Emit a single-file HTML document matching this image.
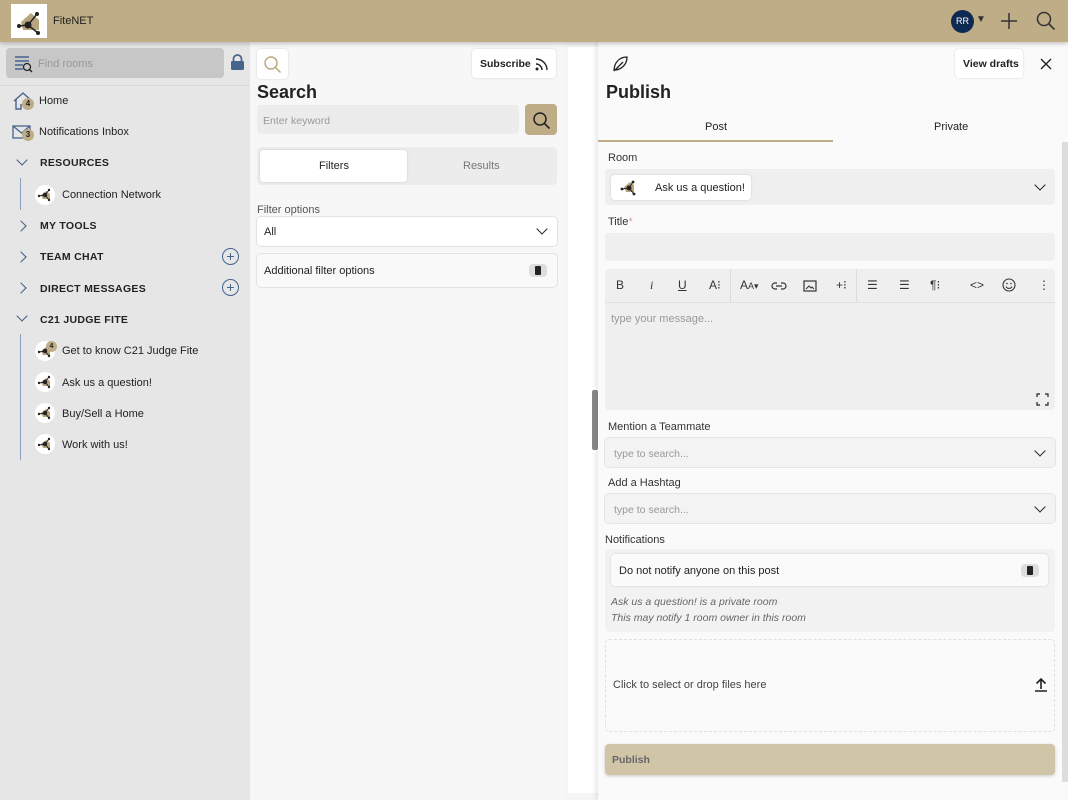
<!DOCTYPE html>
<html><head><meta charset="utf-8"><style>
*{box-sizing:border-box;margin:0;padding:0}
body{width:1068px;height:800px;overflow:hidden;font-family:"Liberation Sans",sans-serif;font-size:11px;color:#222;background:#f5f5f5;position:relative}
.a{position:absolute}
.hdr{left:0;top:0;width:1068px;height:42px;background:#bead86;box-shadow:0 2px 4px rgba(0,0,0,.2);z-index:5}
.side{left:0;top:42px;width:250px;height:758px;background:#e6e6e6}
.mid{left:250px;top:42px;width:315px;height:758px;background:#f7f7f7}
.pub{left:598px;top:42px;width:470px;height:758px;background:#fafafa;box-shadow:-2px 0 5px rgba(0,0,0,.1)}
.it{position:absolute;font-size:11px;color:#222}
.cap{font-weight:bold;font-size:10.5px;letter-spacing:.3px}
.box{position:absolute;background:#f0f0f0;border-radius:4px}
.wbox{position:absolute;background:#fff;border-radius:4px;box-shadow:0 0 2px rgba(0,0,0,.15)}
.lbl{position:absolute;font-size:11px;color:#333}
.ph{color:#999;font-size:10.5px}
.chev{position:absolute;width:8px;height:8px;border-right:1.5px solid #3c5a80;border-bottom:1.5px solid #3c5a80}
.av{position:absolute;width:20px;height:20px;border-radius:50%;background:#fff}
.plus{position:absolute;width:17px;height:17px;border:1.2px solid #46648c;border-radius:50%;color:#46648c;text-align:center;line-height:14px;font-size:14px}
.tog{position:absolute;width:18px;height:13px;background:#ddd;border-radius:4px}
.tog:after{content:"";position:absolute;left:6px;top:2px;width:6px;height:9px;background:#222;border-radius:1px}
.tb{position:absolute;top:278px;font-size:12px;color:#333}
</style></head><body>
<div class="a hdr">
  <div class="a" style="left:11px;top:4px;width:36px;height:34px;background:#fff"><svg width="36" height="34"><polygon points="10,18 20,9 28,16 28,26 12,26" fill="#b8a57d"/><g stroke="#222" stroke-width="1.5"><line x1="8" y1="22" x2="17" y2="21"/><line x1="17" y1="21" x2="26" y2="10"/><line x1="17" y1="21" x2="27" y2="29"/></g><circle cx="17" cy="21" r="3.5" fill="#222"/><circle cx="8" cy="22" r="2" fill="#222"/><circle cx="26" cy="10" r="2" fill="#222"/><circle cx="27" cy="29" r="2" fill="#222"/></svg></div>
  <div class="a" style="left:53px;top:15px;font-size:11px;color:#222">FiteNET</div>
  <div class="a" style="left:951px;top:10px;width:23px;height:23px;border-radius:50%;background:#0f2a52;color:#fff;font-size:9px;text-align:center;line-height:23px">RR</div>
  <div class="a" style="left:976px;top:14px;font-size:10px;color:#333">▼</div>
  <svg class="a" style="left:1000px;top:12px" width="18" height="18"><path d="M9 1v16M1 9h16" stroke="#333" stroke-width="1.5"/></svg>
  <svg class="a" style="left:1036px;top:11px" width="20" height="20"><circle cx="8" cy="8" r="6.5" fill="none" stroke="#333" stroke-width="1.5"/><path d="M13 13l5.5 5.5" stroke="#333" stroke-width="1.6"/></svg>
</div>

<div class="a side">
  <div class="box" style="left:6px;top:6px;width:218px;height:30px;background:#c7c7c7"></div>
  <svg class="a" style="left:14px;top:13px" width="20" height="18"><path d="M1 2h14M1 6h14M1 10h8M1 14h8" stroke="#46648c" stroke-width="1.4"/><circle cx="13" cy="12" r="3.5" fill="none" stroke="#222" stroke-width="1.3"/><path d="M15.5 14.5l2.5 2.5" stroke="#222" stroke-width="1.4"/></svg>
  <div class="it ph" style="left:38px;top:16px;font-size:11px">Find rooms</div>
  <svg class="a" style="left:230px;top:12px" width="15" height="17"><path d="M3.5 7V5a4 4 0 0 1 8 0v2" fill="none" stroke="#46648c" stroke-width="1.8"/><rect x="1" y="7" width="13" height="9" rx="1.5" fill="#46648c"/></svg>
  <div class="a" style="left:0;top:43px;width:250px;height:1px;background:#d8d8d8"></div>
  <svg class="a" style="left:12px;top:49px" width="22" height="20"><path d="M2 10L11 2l9 8M4 8v10h5v-5" fill="none" stroke="#46648c" stroke-width="1.4"/></svg>
  <div class="a" style="left:22px;top:56px;width:12px;height:12px;border-radius:50%;background:#bead86;font-size:8px;text-align:center;line-height:12px;font-weight:bold">4</div>
  <div class="it" style="left:39px;top:53px">Home</div>
  <svg class="a" style="left:12px;top:83px" width="20" height="16"><rect x="1" y="1" width="17" height="12" fill="none" stroke="#46648c" stroke-width="1.3"/><path d="M1 1l8.5 7 8.5-7" fill="none" stroke="#46648c" stroke-width="1.3"/></svg>
  <div class="a" style="left:22px;top:87px;width:12px;height:12px;border-radius:50%;background:#bead86;font-size:8px;text-align:center;line-height:12px;font-weight:bold">3</div>
  <div class="it" style="left:39px;top:84px">Notifications Inbox</div>
  <div class="chev" style="left:18px;top:114px;transform:rotate(45deg)"></div>
  <div class="it cap" style="left:40px;top:115px">RESOURCES</div>
  <div class="a" style="left:20px;top:136px;width:1px;height:32px;background:#8aa0bd"></div>
  <div class="av" style="left:35px;top:143px"><svg width="20" height="20"><polygon points="6,10 11,6 15,9 15,14 8,14" fill="#b8a57d"/><g stroke="#222"><line x1="4" y1="11" x2="10" y2="10"/><line x1="10" y1="10" x2="14" y2="5"/><line x1="10" y1="10" x2="14" y2="15"/></g><circle cx="10" cy="10" r="2.2" fill="#222"/><circle cx="4" cy="11" r="1.2" fill="#222"/><circle cx="14" cy="5" r="1.2" fill="#222"/><circle cx="14" cy="15" r="1.2" fill="#222"/></svg></div>
  <div class="it" style="left:62px;top:147px">Connection Network</div>
  <div class="chev" style="left:17px;top:180px;transform:rotate(-45deg)"></div>
  <div class="it cap" style="left:40px;top:178px">MY TOOLS</div>
  <div class="chev" style="left:17px;top:211px;transform:rotate(-45deg)"></div>
  <div class="it cap" style="left:40px;top:209px">TEAM CHAT</div>
  <div class="plus" style="left:222px;top:206px">+</div>
  <div class="chev" style="left:17px;top:242px;transform:rotate(-45deg)"></div>
  <div class="it cap" style="left:40px;top:241px">DIRECT MESSAGES</div>
  <div class="plus" style="left:222px;top:237px">+</div>
  <div class="chev" style="left:18px;top:270px;transform:rotate(45deg)"></div>
  <div class="it cap" style="left:40px;top:272px">C21 JUDGE FITE</div>
  <div class="a" style="left:20px;top:292px;width:1px;height:126px;background:#8aa0bd"></div>
  <div class="av" style="left:35px;top:299px"><svg width="20" height="20"><polygon points="6,10 11,6 15,9 15,14 8,14" fill="#b8a57d"/><g stroke="#222"><line x1="4" y1="11" x2="10" y2="10"/><line x1="10" y1="10" x2="14" y2="5"/><line x1="10" y1="10" x2="14" y2="15"/></g><circle cx="10" cy="10" r="2.2" fill="#222"/><circle cx="4" cy="11" r="1.2" fill="#222"/><circle cx="14" cy="15" r="1.2" fill="#222"/></svg></div><div class="a" style="left:46px;top:299px;width:11px;height:11px;border-radius:50%;background:#bead86;font-size:7px;text-align:center;line-height:11px;font-weight:bold">4</div>
  <div class="it" style="left:62px;top:303px">Get to know C21 Judge Fite</div>
  <div class="av" style="left:35px;top:330px"><svg width="20" height="20"><polygon points="6,10 11,6 15,9 15,14 8,14" fill="#b8a57d"/><g stroke="#222"><line x1="4" y1="11" x2="10" y2="10"/><line x1="10" y1="10" x2="14" y2="5"/><line x1="10" y1="10" x2="14" y2="15"/></g><circle cx="10" cy="10" r="2.2" fill="#222"/><circle cx="4" cy="11" r="1.2" fill="#222"/><circle cx="14" cy="5" r="1.2" fill="#222"/><circle cx="14" cy="15" r="1.2" fill="#222"/></svg></div><div class="it" style="left:62px;top:335px">Ask us a question!</div>
  <div class="av" style="left:35px;top:361px"><svg width="20" height="20"><polygon points="6,10 11,6 15,9 15,14 8,14" fill="#b8a57d"/><g stroke="#222"><line x1="4" y1="11" x2="10" y2="10"/><line x1="10" y1="10" x2="14" y2="5"/><line x1="10" y1="10" x2="14" y2="15"/></g><circle cx="10" cy="10" r="2.2" fill="#222"/><circle cx="4" cy="11" r="1.2" fill="#222"/><circle cx="14" cy="5" r="1.2" fill="#222"/><circle cx="14" cy="15" r="1.2" fill="#222"/></svg></div><div class="it" style="left:62px;top:366px">Buy/Sell a Home</div>
  <div class="av" style="left:35px;top:392px"><svg width="20" height="20"><polygon points="6,10 11,6 15,9 15,14 8,14" fill="#b8a57d"/><g stroke="#222"><line x1="4" y1="11" x2="10" y2="10"/><line x1="10" y1="10" x2="14" y2="5"/><line x1="10" y1="10" x2="14" y2="15"/></g><circle cx="10" cy="10" r="2.2" fill="#222"/><circle cx="4" cy="11" r="1.2" fill="#222"/><circle cx="14" cy="5" r="1.2" fill="#222"/><circle cx="14" cy="15" r="1.2" fill="#222"/></svg></div><div class="it" style="left:62px;top:397px">Work with us!</div>
</div>

<div class="a mid">
  <div class="wbox" style="left:7px;top:7px;width:31px;height:30px"></div>
  <svg class="a" style="left:13px;top:13px" width="20" height="20"><circle cx="8" cy="8" r="6" fill="none" stroke="#b8a57d" stroke-width="1.4"/><path d="M12.5 12.5l5 5" stroke="#b8a57d" stroke-width="1.5"/></svg>
  <div class="wbox" style="left:222px;top:7px;width:84px;height:29px"></div>
  <div class="it" style="left:230px;top:16px;font-weight:bold;font-size:10.5px">Subscribe</div>
  <svg class="a" style="left:284px;top:14px" width="16" height="16"><circle cx="3" cy="13" r="1.5" fill="#222"/><path d="M2 8a6 6 0 0 1 6 6M2 3a11 11 0 0 1 11 11" fill="none" stroke="#222" stroke-width="1.4"/></svg>
  <div class="it" style="left:7px;top:40px;font-size:18px;font-weight:bold">Search</div>
  <div class="box" style="left:7px;top:63px;width:262px;height:29px;background:#ececec"></div>
  <div class="it ph" style="left:13px;top:73px">Enter keyword</div>
  <div class="box" style="left:275px;top:62px;width:32px;height:31px;background:#bead86"></div>
  <svg class="a" style="left:282px;top:69px" width="19" height="19"><circle cx="8" cy="8" r="6" fill="none" stroke="#222" stroke-width="1.5"/><path d="M12.5 12.5l5 5" stroke="#222" stroke-width="1.6"/></svg>
  <div class="box" style="left:7px;top:105px;width:300px;height:38px;background:#ececec"></div>
  <div class="wbox" style="left:10px;top:108px;width:147px;height:32px"></div>
  <div class="it" style="left:69px;top:118px">Filters</div>
  <div class="it" style="left:213px;top:118px;color:#777">Results</div>
  <div class="it" style="left:7px;top:162px;color:#555">Filter options</div>
  <div class="wbox" style="left:7px;top:175px;width:300px;height:29px;box-shadow:0 0 0 1px #e3e3e3"></div>
  <div class="it" style="left:14px;top:184px">All</div>
  <div class="chev" style="left:288px;top:183px;transform:rotate(45deg);border-color:#222"></div>
  <div class="wbox" style="left:7px;top:212px;width:300px;height:33px;box-shadow:0 0 0 1px #e3e3e3;background:#f9f9f9"></div>
  <div class="it" style="left:14px;top:223px">Additional filter options</div>
  <div class="tog" style="left:279px;top:222px"></div>
</div>
<div class="a" style="left:568px;top:47px;width:32px;height:746px;background:#fff"></div>
<div class="a" style="left:592px;top:390px;width:6px;height:60px;background:#888;border-radius:2px"></div>

<div class="a pub">
  <svg class="a" style="left:13px;top:13px" width="18" height="18"><path d="M3 16C3 8 8 2 16 2c0 8-6 13-13 13M3 16l9-9" fill="none" stroke="#222" stroke-width="1.3"/></svg>
  <div class="wbox" style="left:357px;top:7px;width:68px;height:29px"></div>
  <div class="it" style="left:365px;top:16px;font-weight:bold;font-size:10.5px">View drafts</div>
  <svg class="a" style="left:442px;top:16px" width="12" height="12"><path d="M1 1l10 10M11 1L1 11" stroke="#222" stroke-width="1.4"/></svg>
  <div class="it" style="left:8px;top:40px;font-size:18px;font-weight:bold">Publish</div>
  <div class="it" style="left:107px;top:79px">Post</div>
  <div class="it" style="left:336px;top:79px">Private</div>
  <div class="a" style="left:0;top:98px;width:235px;height:2px;background:#bead86"></div>
  <div class="a" style="left:464px;top:100px;width:6px;height:640px;background:#ddd"></div>
  <div class="lbl" style="left:10px;top:110px">Room</div>
  <div class="box" style="left:7px;top:127px;width:450px;height:36px;background:#efefef"></div>
  <div class="wbox" style="left:13px;top:133px;width:140px;height:25px"></div>
  <svg class="a" style="left:20px;top:135px" width="22" height="20"><polygon points="6,10 12,5 16,8 16,15 8,15" fill="#b8a57d"/><g stroke="#222"><line x1="4" y1="12" x2="11" y2="11"/><line x1="11" y1="11" x2="15" y2="5"/><line x1="11" y1="11" x2="16" y2="17"/></g><circle cx="11" cy="11" r="2.5" fill="#222"/><circle cx="4" cy="12" r="1.4" fill="#222"/><circle cx="15" cy="5" r="1.4" fill="#222"/><circle cx="16" cy="17" r="1.4" fill="#222"/></svg>
  <div class="it" style="left:57px;top:140px">Ask us a question!</div>
  <div class="chev" style="left:438px;top:139px;transform:rotate(45deg);border-color:#222"></div>
  <div class="lbl" style="left:10px;top:174px">Title<span style="color:#c9a">*</span></div>
  <div class="box" style="left:7px;top:191px;width:450px;height:28px;background:#efefef"></div>
  <div class="box" style="left:7px;top:227px;width:450px;height:141px;background:#efefef"></div>
  <div class="a" style="left:7px;top:260px;width:450px;height:1px;background:#e0e0e0"></div>
  <div class="a" style="left:132px;top:227px;width:1px;height:33px;background:#ddd"></div>
  <div class="a" style="left:258px;top:227px;width:1px;height:33px;background:#ddd"></div>
  <div class="it ph" style="left:13px;top:271px;font-size:11px">type your message...</div>
  <svg class="a" style="left:438px;top:351px" width="13" height="13"><path d="M1 4V1h3M9 1h3v3M12 9v3H9M4 12H1V9" fill="none" stroke="#222" stroke-width="1.2"/></svg>
  <div class="lbl" style="left:10px;top:379px">Mention a Teammate</div>
  <div class="wbox" style="left:7px;top:396px;width:450px;height:29px;background:#f3f3f3;box-shadow:0 0 0 1px #e5e5e5"></div>
  <div class="it ph" style="left:16px;top:406px">type to search...</div>
  <div class="chev" style="left:438px;top:405px;transform:rotate(45deg);border-color:#222"></div>
  <div class="lbl" style="left:10px;top:435px">Add a Hashtag</div>
  <div class="wbox" style="left:7px;top:452px;width:450px;height:29px;background:#f3f3f3;box-shadow:0 0 0 1px #e5e5e5"></div>
  <div class="it ph" style="left:16px;top:462px">type to search...</div>
  <div class="chev" style="left:438px;top:461px;transform:rotate(45deg);border-color:#222"></div>
  <div class="lbl" style="left:7px;top:492px">Notifications</div>
  <div class="box" style="left:7px;top:507px;width:450px;height:83px;background:#f2f2f2"></div>
  <div class="wbox" style="left:13px;top:512px;width:437px;height:32px;background:#fafafa"></div>
  <div class="it" style="left:21px;top:523px">Do not notify anyone on this post</div>
  <div class="tog" style="left:423px;top:522px"></div>
  <div class="it" style="left:13px;top:554px;font-style:italic;color:#666;font-size:10.5px">Ask us a question! is a private room</div>
  <div class="it" style="left:13px;top:570px;font-style:italic;color:#666;font-size:10.5px">This may notify 1 room owner in this room</div>
  <div class="a" style="left:7px;top:597px;width:450px;height:93px;border:1px dashed #e0e0e0;border-radius:4px"></div>
  <div class="it" style="left:15px;top:637px;color:#444">Click to select or drop files here</div>
  <svg class="a" style="left:436px;top:635px" width="14" height="15"><path d="M7 12V2M2.5 6.5L7 2l4.5 4.5M1 14h12" fill="none" stroke="#222" stroke-width="1.6"/></svg>
  <div class="box" style="left:7px;top:702px;width:450px;height:31px;background:#d1c5a8;box-shadow:0 1px 3px rgba(0,0,0,.2)"></div>
  <div class="it" style="left:14px;top:712px;font-weight:bold;color:#666;font-size:10.5px">Publish</div>
</div>
<div class="tb" style="left:616px">B</div>
<div class="tb" style="left:650px;font-style:italic;font-family:'Liberation Serif'">i</div>
<div class="tb" style="left:678px;text-decoration:underline">U</div>
<div class="tb" style="left:709px">A⁝</div>
<div class="tb" style="left:740px">A<span style="font-size:9px">A▾</span></div>
<svg class="a" style="left:771px;top:280px" width="16" height="12"><path d="M6 3H4a3 3 0 0 0 0 6h2M10 3h2a3 3 0 0 1 0 6h-2M5 6h6" fill="none" stroke="#333" stroke-width="1.2"/></svg>
<svg class="a" style="left:803px;top:280px" width="14" height="12"><rect x="1" y="1" width="12" height="10" fill="none" stroke="#333" stroke-width="1.2"/><path d="M3 9l3-3 2 2 1-1 2 2" fill="none" stroke="#333"/></svg>
<div class="tb" style="left:836px">+⁝</div>
<div class="tb" style="left:867px">☰</div>
<div class="tb" style="left:899px">☰</div>
<div class="tb" style="left:930px">¶⁝</div>
<div class="tb" style="left:970px">&lt;&gt;</div>
<svg class="a" style="left:1002px;top:278px" width="14" height="14"><circle cx="7" cy="7" r="6" fill="none" stroke="#333" stroke-width="1.1"/><circle cx="5" cy="5.5" r=".8" fill="#333"/><circle cx="9" cy="5.5" r=".8" fill="#333"/><path d="M4 8.5a3.3 3.3 0 0 0 6 0" fill="none" stroke="#333"/></svg>
<div class="tb" style="left:1038px">⋮</div>
</body></html>
